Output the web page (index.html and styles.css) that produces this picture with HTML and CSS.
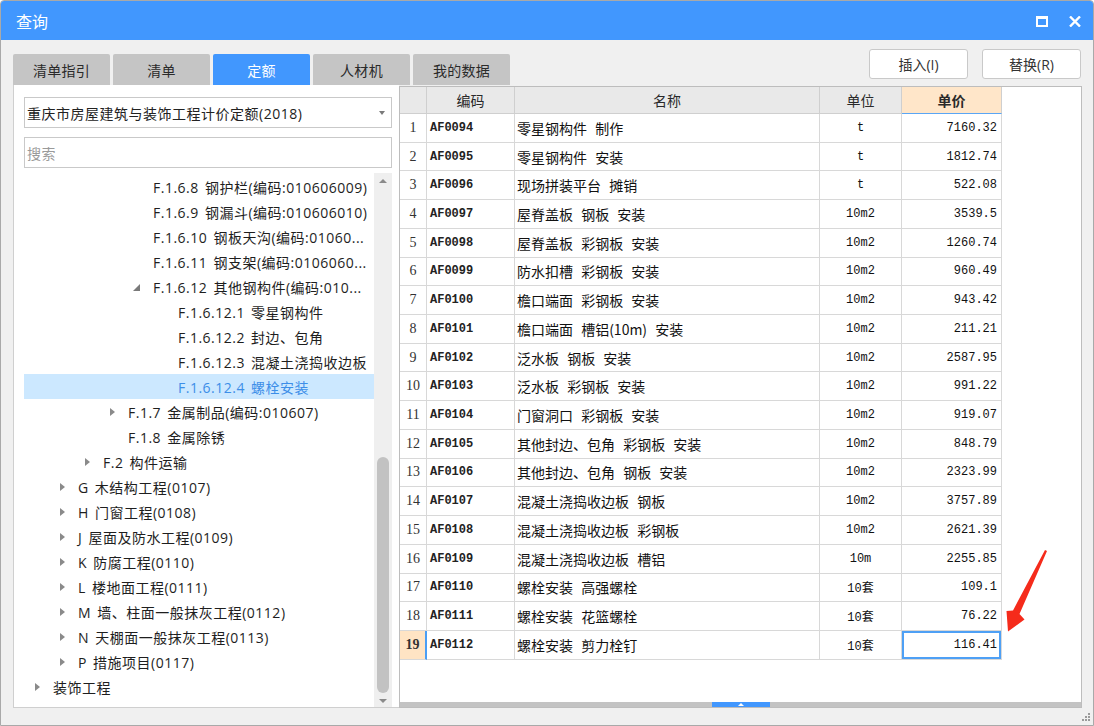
FILE: index.html
```html
<!DOCTYPE html>
<html lang="zh-CN">
<head>
<meta charset="utf-8">
<title>查询</title>
<link rel="stylesheet" href="styles.css">
</head>
<body>
<div class="window">
  <div class="titlebar">
    <span class="title">查询</span>
    <div class="controls">
      <svg class="ctl-max" width="12" height="11" viewBox="0 0 12 11"><rect x="1" y="1.5" width="10" height="8.5" fill="none" stroke="#fff" stroke-width="2"/><rect x="0" y="0" width="12" height="3" fill="#fff"/></svg>
      <svg class="ctl-close" width="12" height="11" viewBox="0 0 12 11"><path d="M1 0.5 L11 10.5 M11 0.5 L1 10.5" stroke="#fff" stroke-width="2.4"/></svg>
    </div>
  </div>

  <div class="toolbar">
    <div class="tabs">
      <div class="tab">清单指引</div>
      <div class="tab">清单</div>
      <div class="tab active">定额</div>
      <div class="tab">人材机</div>
      <div class="tab">我的数据</div>
    </div>
    <div class="buttons">
      <div class="btn">插入(I)</div>
      <div class="btn">替换(R)</div>
    </div>
  </div>

  <div class="main">
    <div class="left">
      <div class="select"><span>重庆市房屋建筑与装饰工程计价定额(2018)</span><i class="caret"></i></div>
      <div class="search">搜索</div>
      <div class="treewrap">
        <ul class="tree">
          <li class="l4"><i class="tw"></i><span>F.1.6.8 钢护栏(编码:010606009)</span></li>
          <li class="l4"><i class="tw"></i><span>F.1.6.9 钢漏斗(编码:010606010)</span></li>
          <li class="l4"><i class="tw"></i><span>F.1.6.10 钢板天沟(编码:01060...</span></li>
          <li class="l4"><i class="tw"></i><span>F.1.6.11 钢支架(编码:0106060...</span></li>
          <li class="l4"><i class="tw open"></i><span>F.1.6.12 其他钢构件(编码:010...</span></li>
          <li class="l5"><i class="tw"></i><span>F.1.6.12.1 零星钢构件</span></li>
          <li class="l5"><i class="tw"></i><span>F.1.6.12.2 封边、包角</span></li>
          <li class="l5"><i class="tw"></i><span>F.1.6.12.3 混凝土浇捣收边板</span></li>
          <li class="l5 sel"><i class="tw"></i><span>F.1.6.12.4 螺栓安装</span></li>
          <li class="l3"><i class="tw closed"></i><span>F.1.7 金属制品(编码:010607)</span></li>
          <li class="l3"><i class="tw"></i><span>F.1.8 金属除锈</span></li>
          <li class="l2"><i class="tw closed"></i><span>F.2 构件运输</span></li>
          <li class="l1"><i class="tw closed"></i><span>G 木结构工程(0107)</span></li>
          <li class="l1"><i class="tw closed"></i><span>H 门窗工程(0108)</span></li>
          <li class="l1"><i class="tw closed"></i><span>J 屋面及防水工程(0109)</span></li>
          <li class="l1"><i class="tw closed"></i><span>K 防腐工程(0110)</span></li>
          <li class="l1"><i class="tw closed"></i><span>L 楼地面工程(0111)</span></li>
          <li class="l1"><i class="tw closed"></i><span>M 墙、柱面一般抹灰工程(0112)</span></li>
          <li class="l1"><i class="tw closed"></i><span>N 天棚面一般抹灰工程(0113)</span></li>
          <li class="l1"><i class="tw closed"></i><span>P 措施项目(0117)</span></li>
          <li class="l0"><i class="tw closed"></i><span>装饰工程</span></li>
        </ul>
        <div class="vscroll">
          <i class="up"></i>
          <div class="thumb"></div>
          <i class="down"></i>
        </div>
      </div>
    </div>

    <div class="right">
      <div class="grid">
        <div class="row head">
          <div class="c idx"></div>
          <div class="c">编码</div>
          <div class="c">名称</div>
          <div class="c">单位</div>
          <div class="c price-h">单价</div>
        </div>
        <div class="row"><div class="c idx">1</div><div class="c code">AF0094</div><div class="c name">零星钢构件 制作</div><div class="c unit">t</div><div class="c price">7160.32</div></div>
        <div class="row"><div class="c idx">2</div><div class="c code">AF0095</div><div class="c name">零星钢构件 安装</div><div class="c unit">t</div><div class="c price">1812.74</div></div>
        <div class="row"><div class="c idx">3</div><div class="c code">AF0096</div><div class="c name">现场拼装平台 摊销</div><div class="c unit">t</div><div class="c price">522.08</div></div>
        <div class="row"><div class="c idx">4</div><div class="c code">AF0097</div><div class="c name">屋脊盖板 钢板 安装</div><div class="c unit">10m2</div><div class="c price">3539.5</div></div>
        <div class="row"><div class="c idx">5</div><div class="c code">AF0098</div><div class="c name">屋脊盖板 彩钢板 安装</div><div class="c unit">10m2</div><div class="c price">1260.74</div></div>
        <div class="row"><div class="c idx">6</div><div class="c code">AF0099</div><div class="c name">防水扣槽 彩钢板 安装</div><div class="c unit">10m2</div><div class="c price">960.49</div></div>
        <div class="row"><div class="c idx">7</div><div class="c code">AF0100</div><div class="c name">檐口端面 彩钢板 安装</div><div class="c unit">10m2</div><div class="c price">943.42</div></div>
        <div class="row"><div class="c idx">8</div><div class="c code">AF0101</div><div class="c name">檐口端面 槽铝(10m) 安装</div><div class="c unit">10m2</div><div class="c price">211.21</div></div>
        <div class="row"><div class="c idx">9</div><div class="c code">AF0102</div><div class="c name">泛水板 钢板 安装</div><div class="c unit">10m2</div><div class="c price">2587.95</div></div>
        <div class="row"><div class="c idx">10</div><div class="c code">AF0103</div><div class="c name">泛水板 彩钢板 安装</div><div class="c unit">10m2</div><div class="c price">991.22</div></div>
        <div class="row"><div class="c idx">11</div><div class="c code">AF0104</div><div class="c name">门窗洞口 彩钢板 安装</div><div class="c unit">10m2</div><div class="c price">919.07</div></div>
        <div class="row"><div class="c idx">12</div><div class="c code">AF0105</div><div class="c name">其他封边、包角 彩钢板 安装</div><div class="c unit">10m2</div><div class="c price">848.79</div></div>
        <div class="row"><div class="c idx">13</div><div class="c code">AF0106</div><div class="c name">其他封边、包角 钢板 安装</div><div class="c unit">10m2</div><div class="c price">2323.99</div></div>
        <div class="row"><div class="c idx">14</div><div class="c code">AF0107</div><div class="c name">混凝土浇捣收边板 钢板</div><div class="c unit">10m2</div><div class="c price">3757.89</div></div>
        <div class="row"><div class="c idx">15</div><div class="c code">AF0108</div><div class="c name">混凝土浇捣收边板 彩钢板</div><div class="c unit">10m2</div><div class="c price">2621.39</div></div>
        <div class="row"><div class="c idx">16</div><div class="c code">AF0109</div><div class="c name">混凝土浇捣收边板 槽铝</div><div class="c unit">10m</div><div class="c price">2255.85</div></div>
        <div class="row"><div class="c idx">17</div><div class="c code">AF0110</div><div class="c name">螺栓安装 高强螺栓</div><div class="c unit">10套</div><div class="c price">109.1</div></div>
        <div class="row"><div class="c idx">18</div><div class="c code">AF0111</div><div class="c name">螺栓安装 花篮螺栓</div><div class="c unit">10套</div><div class="c price">76.22</div></div>
        <div class="row current"><div class="c idx">19</div><div class="c code">AF0112</div><div class="c name">螺栓安装 剪力栓钉</div><div class="c unit">10套</div><div class="c price selected">116.41</div></div>
      </div>
      <div class="hscroll"><span class="hhandle"><i></i></span></div>
    </div>
  </div>

  <div class="grip">
    <svg width="9" height="9" viewBox="0 0 9 9" fill="#9a9a9a"><rect x="7" y="1" width="2" height="2"/><rect x="4" y="4" width="2" height="2"/><rect x="7" y="4" width="2" height="2"/><rect x="1" y="7" width="2" height="2"/><rect x="4" y="7" width="2" height="2"/><rect x="7" y="7" width="2" height="2"/></svg>
  </div>

  <svg class="arrow" width="1094" height="726" viewBox="0 0 1094 726">
    <polygon points="1047,551 1019.5,614 1024.5,619.5 1008,631.5 1006.5,611 1013,610.5 1045,550" fill="#F52B1B"/>
  </svg>
</div>
</body>
</html>
```

FILE: styles.css
```css
* { box-sizing: border-box; }

html, body {
  margin: 0;
  padding: 0;
}

body {
  width: 1094px;
  height: 726px;
  overflow: hidden;
  font-family: "Open Sans", "Noto Sans CJK SC", sans-serif;
  color: #222;
  background: #ffffff;
}

.window {
  position: relative;
  width: 1094px;
  height: 726px;
  border: 1px solid #a9a9a9;
  border-radius: 4px 4px 0 0;
  background: #f0f0f0;
  display: flex;
  flex-direction: column;
  overflow: hidden;
}

/* Title bar */
.titlebar {
  height: 39px;
  flex: none;
  background: #4197fe;
  color: #fff;
  display: flex;
  align-items: center;
  padding: 0 12px 0 15px;
}

.title {
  font-size: 16px;
  line-height: 1;
  margin-top: 2px;
}

.controls {
  margin-left: auto;
  display: flex;
  align-items: center;
  gap: 21px;
  margin-top: 2px;
}

/* Toolbar: tabs and buttons */
.toolbar {
  height: 45px;
  flex: none;
  display: flex;
  padding: 0 12px 0 12px;
}

.tabs {
  display: flex;
  align-self: flex-end;
  gap: 3px;
}

.tab {
  width: 97px;
  height: 31px;
  background: #c5c5c5;
  border-radius: 2px 2px 0 0;
  display: flex;
  align-items: center;
  justify-content: center;
  font-size: 14px;
  color: #2a2a2a;
  letter-spacing: 0.3px;
}

.tab.active {
  background: #4197fe;
  color: #fff;
}

.buttons {
  margin-left: auto;
  display: flex;
  gap: 14px;
  padding-top: 9px;
}

.btn {
  width: 99px;
  height: 30px;
  background: #fff;
  border: 1px solid #c9c9c9;
  border-radius: 3px;
  display: flex;
  align-items: center;
  justify-content: center;
  font-size: 14px;
  color: #333;
}

/* Main area */
.main {
  display: flex;
  height: 623px;
  flex: none;
  padding: 0 11px 0 12px;
}

.left {
  width: 386px;
  height: 623px;
  background: #fff;
  border-left: 1px solid #cfcfcf;
  border-bottom: 1px solid #cfcfcf;
  padding: 12px 7px 0 10px;
  display: flex;
  flex-direction: column;
}

.select {
  height: 31px;
  border: 1px solid #c9c9c9;
  display: flex;
  align-items: center;
  padding-left: 2px;
  font-size: 14px;
  color: #222;
  letter-spacing: 0.5px;
}

.caret {
  margin-left: auto;
  margin-right: 6px;
  width: 0;
  height: 0;
  border-left: 3.5px solid transparent;
  border-right: 3.5px solid transparent;
  border-top: 4px solid #7a7a7a;
}

.search {
  margin-top: 9px;
  height: 31px;
  border: 1px solid #c9c9c9;
  display: flex;
  align-items: center;
  padding-left: 2px;
  font-size: 14px;
  color: #9a9a9a;
  letter-spacing: 0.5px;
}

.treewrap {
  margin-top: 5px;
  display: flex;
  flex: 1;
  min-height: 0;
}

.tree {
  list-style: none;
  margin: 1px 0 0 0;
  padding: 0;
  width: 350px;
}

.tree li {
  height: 25px;
  display: flex;
  align-items: center;
  font-size: 14px;
  color: #1e1e1e;
  white-space: nowrap;
  letter-spacing: 0.5px;
  word-spacing: 2px;
}

.tree li.sel {
  background: #cce8ff;
  color: #3d8ee8;
}

.l0 { padding-left: 9px; }
.l1 { padding-left: 34px; }
.l2 { padding-left: 59px; }
.l3 { padding-left: 84px; }
.l4 { padding-left: 109px; }
.l5 { padding-left: 134px; }

.tw {
  width: 20px;
  height: 25px;
  flex: none;
  position: relative;
}

.tw.closed::before {
  content: "";
  position: absolute;
  left: 2px;
  top: 9px;
  border-top: 4px solid transparent;
  border-bottom: 4px solid transparent;
  border-left: 5px solid #8a8a8a;
}

.tw.open::before {
  content: "";
  position: absolute;
  left: 0;
  top: 10px;
  border-left: 7px solid transparent;
  border-bottom: 7px solid #7a7a7a;
}

.vscroll {
  width: 18px;
  background: #efefef;
  position: relative;
  display: flex;
  flex-direction: column;
  align-items: center;
}

.vscroll .up {
  margin-top: 6px;
  width: 0;
  height: 0;
  border-left: 4.5px solid transparent;
  border-right: 4.5px solid transparent;
  border-bottom: 4px solid #8a8a8a;
}

.vscroll .thumb {
  margin-top: 274px;
  width: 12px;
  height: 236px;
  background: #c2c2c2;
  border-radius: 6px;
}

.vscroll .down {
  margin-top: 6px;
  width: 0;
  height: 0;
  border-left: 4.5px solid transparent;
  border-right: 4.5px solid transparent;
  border-top: 4px solid #8a8a8a;
}

/* Right panel (table) */
.right {
  width: 683px;
  height: 622px;
  margin-top: 1px;
  border: 1px solid #bdbdbd;
  background: #fff;
  display: flex;
  flex-direction: column;
}

.grid {
  flex: 1;
  font-family: "Noto Sans CJK SC", sans-serif;
}

.row {
  display: grid;
  grid-template-columns: 27px 88px 305px 82px 100px;
  height: 28.72px;
}

.row.head {
  height: 27px;
}

.c {
  border-right: 1px solid #d8d8d8;
  border-bottom: 1px solid #d8d8d8;
  display: flex;
  align-items: center;
  white-space: pre;
  overflow: hidden;
}

.head .c {
  background: #e9e9e9;
  border-color: #cfcfcf;
  justify-content: center;
  font-size: 14px;
  color: #2a2a2a;
}

.head .c.price-h {
  background: #ffe6c9;
  font-weight: bold;
  border-bottom: 1px solid #5aa6f5;
}

.idx {
  justify-content: center;
  font-family: "Liberation Serif", serif;
  font-size: 14px;
  color: #333;
}

.code {
  padding-left: 3px;
  font-family: "Liberation Mono", monospace;
  font-size: 12px;
  font-weight: bold;
  color: #222;
}

.name {
  padding-left: 2px;
  font-size: 14px;
  color: #111;
  word-spacing: 5px;
}

.unit {
  justify-content: center;
  font-family: "Liberation Mono", "Noto Sans CJK SC", monospace;
  font-size: 12px;
  color: #111;
}

.price {
  justify-content: flex-end;
  padding-right: 4px;
  font-family: "Liberation Mono", monospace;
  font-size: 12px;
  color: #111;
}

.current .idx {
  background: #ffe4c4;
  font-weight: bold;
  border-right: 2px solid #4a9ef5;
}

.price.selected {
  box-shadow: inset 0 0 0 2px #4ea0f5;
}

.hscroll {
  height: 5px;
  background: #c3c3c3;
  display: flex;
  justify-content: center;
  flex: none;
}

.hhandle {
  width: 58px;
  height: 5px;
  background: #4197fe;
  display: flex;
  justify-content: center;
  align-items: center;
}

.hhandle i {
  width: 0;
  height: 0;
  border-left: 3px solid transparent;
  border-right: 3px solid transparent;
  border-bottom: 3px solid #fff;
}

.grip {
  position: absolute;
  right: 3px;
  bottom: 4px;
  line-height: 0;
}

.arrow {
  position: absolute;
  left: -1px;
  top: -1px;
  pointer-events: none;
}
```
